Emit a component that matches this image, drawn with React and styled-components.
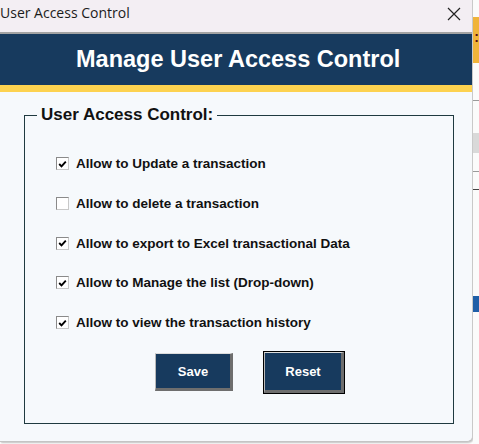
import React, { useState } from 'react'
import styled, { createGlobalStyle } from 'styled-components'

const GlobalStyle = createGlobalStyle`
  html, body {
    margin: 0;
    padding: 0;
    background: #ffffff;
  }
  body {
    font-family: 'Liberation Sans', Arial, sans-serif;
  }
`

const permissions = [
  { id: 'update', label: 'Allow to Update a transaction', checked: true },
  { id: 'delete', label: 'Allow to delete a transaction', checked: false },
  { id: 'export', label: 'Allow to export to Excel transactional Data', checked: true },
  { id: 'list', label: 'Allow to Manage the list (Drop-down)', checked: true },
  { id: 'history', label: 'Allow to view the transaction history', checked: true }
]

const CheckBox = ({ checked, onToggle }) => (
  <StyledBox onClick={onToggle}>
    {checked && (
      <svg width='9' height='8' viewBox='0 0 9 8'>
        <path d='M1.2 4 L3.5 6.3 L7.8 1.6' fill='none' stroke='#000' strokeWidth='1.9' />
      </svg>
    )}
  </StyledBox>
)

const App = () => {
  const [values, setValues] = useState(
    permissions.reduce((acc, p) => ({ ...acc, [p.id]: p.checked }), {})
  )

  const toggle = id => setValues(v => ({ ...v, [id]: !v[id] }))

  return (
    <>
      <GlobalStyle />
      <Screen>
        <Window>
          <TitleBar>
            <span className='caption'>User Access Control</span>
            <svg className='close' width='14' height='14' viewBox='0 0 14 14'>
              <path d='M1 1 L13 13 M13 1 L1 13' stroke='#222' strokeWidth='1.2' />
            </svg>
          </TitleBar>
          <Header>Manage User Access Control</Header>
          <Body>
            <Frame>
              <legend>User Access Control:</legend>
              <FrameContent>
                {permissions.map(p => (
                  <Row key={p.id}>
                    <CheckBox checked={values[p.id]} onToggle={() => toggle(p.id)} />
                    <span>{p.label}</span>
                  </Row>
                ))}
                <Buttons>
                  <Button>Save</Button>
                  <Button focused>Reset</Button>
                </Buttons>
              </FrameContent>
            </Frame>
          </Body>
        </Window>
        <Behind>
          <div className='cell'>:</div>
          <div className='line first' />
          <div className='grey' />
          <div className='line second' />
          <div className='line third' />
          <div className='blue' />
        </Behind>
      </Screen>
    </>
  )
}

const Screen = styled.div`
  display: flex;
  width: 479px;
  height: 444px;
  overflow: hidden;
  background: #ffffff;
`

const Window = styled.div`
  width: 473px;
  height: 441px;
  display: flex;
  flex-direction: column;
  background: #f3eef3;
  border-right: 1px solid #c9c9c9;
  border-bottom: 1px solid #c4c4c4;
  border-bottom-right-radius: 6px;
  box-shadow: 1px 1px 2px rgba(0, 0, 0, 0.25);
  overflow: hidden;
`

const TitleBar = styled.div`
  height: 34px;
  box-sizing: border-box;
  display: flex;
  align-items: flex-start;
  justify-content: space-between;
  border-bottom: 2px solid #a3a3a3;

  & .caption {
    font-family: 'Open Sans', 'Noto Sans', sans-serif;
    font-size: 14px;
    line-height: 19px;
    padding-top: 3px;
    color: #1b1b1b;
  }

  & .close {
    margin: 7px 11px 0 0;
  }
`

const Header = styled.div`
  height: 51px;
  background: #173a5e;
  border-bottom: 7px solid #fdd250;
  color: #ffffff;
  font-weight: 700;
  font-size: 23.5px;
  display: flex;
  align-items: center;
  justify-content: center;
  padding-left: 4px;
`

const Body = styled.div`
  flex: 1;
  background: #f6f9fc;
  padding: 13px 0 0 24px;
`

const Frame = styled.fieldset`
  margin: 0;
  width: 430px;
  box-sizing: border-box;
  border: 1px solid #1f3a40;
  padding: 0;
  min-inline-size: auto;

  & legend {
    margin-left: 12px;
    padding: 0 4px;
    font-size: 17px;
    line-height: 20px;
    font-weight: 700;
    color: #111;
  }
`

const FrameContent = styled.div`
  padding: 19px 0 30px 31px;
`

const Row = styled.div`
  display: flex;
  align-items: center;
  gap: 7px;
  height: 39.7px;
  font-size: 13.5px;
  font-weight: 700;
  color: #111;
`

const StyledBox = styled.div`
  width: 13px;
  height: 13px;
  box-sizing: border-box;
  background: #ffffff;
  border: 1px solid #8a8a8a;
  border-right-color: #c8c8c8;
  border-bottom-color: #c8c8c8;
  display: flex;
  align-items: center;
  justify-content: center;
  cursor: pointer;
`

const Buttons = styled.div`
  display: flex;
  gap: 31px;
  margin-top: 11px;
  padding-left: 99px;
`

const Button = styled.button`
  width: ${({ focused }) => (focused ? '80px' : '78px')};
  height: ${({ focused }) => (focused ? '41px' : '38px')};
  margin-top: ${({ focused }) => (focused ? '-1px' : '0')};
  box-sizing: border-box;
  background: #173a5e;
  color: #ffffff;
  font-family: 'Liberation Sans', Arial, sans-serif;
  font-size: 13px;
  font-weight: 700;
  border-style: solid;
  border-width: 1px 3px 3px 1px;
  border-color: #dcdcdc #6e6e6e #6e6e6e #b8b8b8;
  ${({ focused }) => focused && 'box-shadow: 0 0 0 1px #000;'}
  padding: 0;
  cursor: pointer;
`

const Behind = styled.div`
  flex: 1;
  display: flex;
  flex-direction: column;
  background: #fbfbfb;

  & .cell {
    margin-top: 17px;
    height: 46px;
    background: #f0b43a;
    color: #5a1010;
    font-weight: 700;
    font-size: 14px;
    line-height: 40px;
    padding-left: 1px;
  }

  & .line {
    height: 1px;
    background: #9a9a9a;
  }

  & .first {
    margin-top: 37px;
  }

  & .grey {
    margin-top: 32px;
    height: 20px;
    background: #d9d9d9;
  }

  & .second {
    margin-top: 18px;
  }

  & .third {
    margin-top: 17px;
    background: #444;
  }

  & .blue {
    margin-top: 106px;
    height: 16px;
    background: #1f5fa8;
  }
`

export default App
